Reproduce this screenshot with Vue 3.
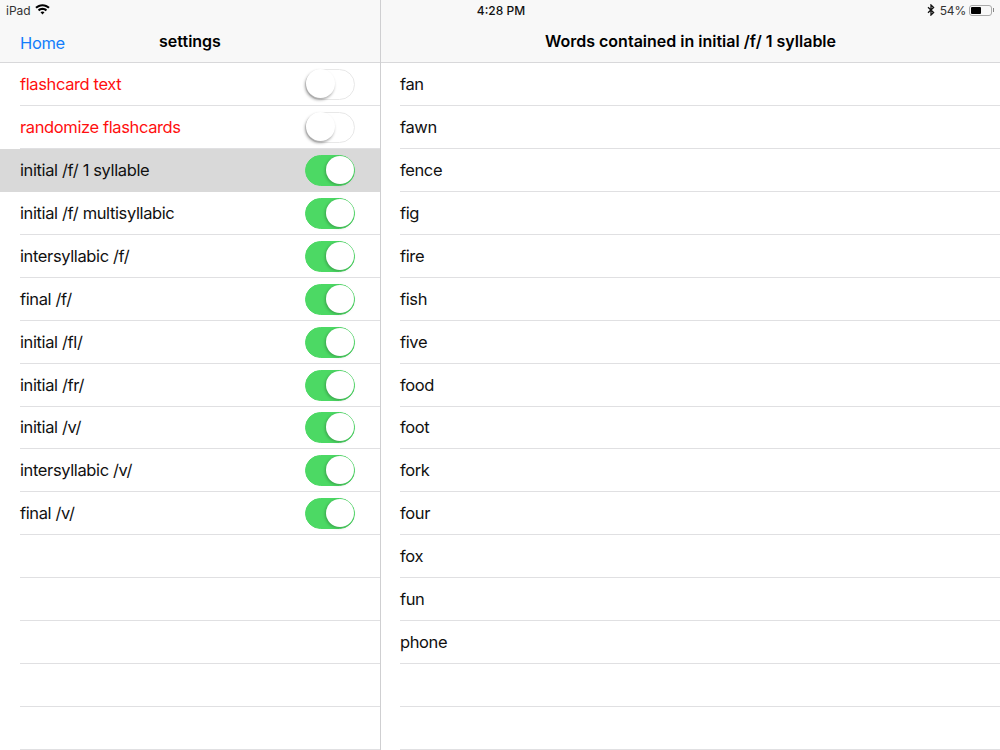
<template>
  <div class="ipad">
    <div class="status-bar">
      <div class="status-left">
        <span>iPad</span>
        <svg class="wifi" width="15" height="11" viewBox="0 0 15 11">
          <path d="M7.5 0.2C4.7 0.2 2.2 1.3 0.3 3.1L1.7 4.6C3.2 3.1 5.2 2.2 7.5 2.2s4.3 0.9 5.8 2.4l1.4-1.5C12.8 1.3 10.3 0.2 7.5 0.2z" />
          <path d="M7.5 3.8C5.7 3.8 4.1 4.5 2.9 5.7L4.3 7.2C5.1 6.4 6.2 5.9 7.5 5.9s2.4 0.5 3.2 1.3l1.4-1.5C10.9 4.5 9.3 3.8 7.5 3.8z" />
          <path d="M7.5 7.4C6.7 7.4 6 7.7 5.5 8.2L7.5 10.6 9.5 8.2C9 7.7 8.3 7.4 7.5 7.4z" />
        </svg>
      </div>
      <div class="status-time">4:28 PM</div>
      <div class="status-right">
        <svg class="bt" width="8" height="12" viewBox="0 0 8 12">
          <path d="M1 3.2L6.6 8.4 4 11V1L6.6 3.6 1 8.8" fill="none" stroke="#111" stroke-width="1.3" />
        </svg>
        <span class="pct">54%</span>
        <div class="battery"><div class="battery-fill" :style="{ width: 54 + '%' }"></div></div>
        <div class="battery-tip"></div>
      </div>
    </div>

    <div class="panes">
      <div class="pane side">
        <div class="nav">
          <a class="nav-back">Home</a>
          <div class="nav-title">settings</div>
        </div>
        <div class="row" v-for="item in settings" :key="item.label" :class="{ selected: item.selected }">
          <div class="row-inner">
            <span :class="{ red: item.red }">{{ item.label }}</span>
            <div class="switch" :class="{ on: item.on }"><div class="knob"></div></div>
          </div>
        </div>
        <div class="row" v-for="n in 5" :key="n"><div class="row-inner"></div></div>
      </div>

      <div class="pane main">
        <div class="nav">
          <div class="nav-title">Words contained in initial /f/ 1 syllable</div>
        </div>
        <div class="row" v-for="w in words" :key="w"><div class="row-inner">{{ w }}</div></div>
        <div class="row" v-for="n in 2" :key="n"><div class="row-inner"></div></div>
      </div>
    </div>
  </div>
</template>

<script setup>
const settings = [
  { label: 'flashcard text', red: true, on: false },
  { label: 'randomize flashcards', red: true, on: false },
  { label: 'initial /f/ 1 syllable', on: true, selected: true },
  { label: 'initial /f/ multisyllabic', on: true },
  { label: 'intersyllabic /f/', on: true },
  { label: 'final /f/', on: true },
  { label: 'initial /fl/', on: true },
  { label: 'initial /fr/', on: true },
  { label: 'initial /v/', on: true },
  { label: 'intersyllabic /v/', on: true },
  { label: 'final /v/', on: true }
]

const words = ['fan', 'fawn', 'fence', 'fig', 'fire', 'fish', 'five', 'food', 'foot', 'fork', 'four', 'fox', 'fun', 'phone']
</script>

<style>
html, body {
  margin: 0;
  overflow: hidden;
  background: #fff;
}
</style>

<style scoped>
.ipad {
  position: relative;
  width: 1000px;
  height: 750px;
  overflow: hidden;
  font-family: "Inter", "Liberation Sans", sans-serif;
  color: #111;
}

/* status bar sits over the nav bars */
.status-bar {
  position: absolute;
  top: 0;
  left: 0;
  right: 0;
  height: 20px;
  z-index: 2;
  display: grid;
  grid-template-columns: 1fr auto 1fr;
  align-items: center;
  padding: 0 6px 0 6px;
  font-size: 12px;
}

.status-left {
  display: flex;
  align-items: center;
  gap: 4px;
  color: #333;
}

.wifi {
  fill: #000;
  margin-top: -2px;
}

.status-time {
  font-weight: 500;
  transform: translateX(1px);
}

.status-right {
  display: flex;
  justify-content: flex-end;
  align-items: center;
  color: #333;
}

.pct {
  letter-spacing: -0.2px;
}

.bt {
  margin-right: 5px;
}

.battery {
  width: 23px;
  height: 11px;
  margin-left: 3px;
  padding: 1px;
  border: 1px solid #aaa;
  border-radius: 3px;
  box-sizing: border-box;
}

.battery-fill {
  height: 100%;
  background: #000;
  border-radius: 1px;
}

.battery-tip {
  width: 1px;
  height: 4px;
  margin-left: 1px;
  background: #888;
}

.panes {
  display: flex;
  height: 750px;
}

.pane {
  box-sizing: border-box;
}

.side {
  width: 381px;
  flex: none;
  border-right: 1px solid #cfcfd1;
}

.main {
  flex: 1;
}

.nav {
  position: relative;
  height: 63px;
  box-sizing: border-box;
  background: #f8f8f8;
  border-bottom: 1px solid #d8d8da;
  display: flex;
  align-items: flex-end;
  justify-content: center;
  padding-bottom: 11px;
}

.nav-title {
  font-size: 16px;
  font-weight: 600;
  line-height: 20px;
  color: #000;
}

.nav-back {
  position: absolute;
  left: 20px;
  bottom: 9px;
  font-size: 16.5px;
  letter-spacing: -0.38px;
  line-height: 20px;
  color: #147efb;
}

.row {
  height: 42.95px;
  box-sizing: border-box;
  padding-left: 20px;
}

.row-inner {
  height: 100%;
  box-sizing: border-box;
  border-bottom: 1px solid #e0e0e2;
  display: flex;
  align-items: center;
  justify-content: space-between;
  padding-right: 25px;
  font-size: 16.5px;
  letter-spacing: -0.38px;
  color: #111;
}

.row.selected {
  background: #d9d9d9;
}

.row.selected .row-inner {
  border-bottom-color: #d9d9d9;
}

.red {
  color: #ff0f0f;
}

.switch {
  position: relative;
  width: 50px;
  height: 31px;
  margin-top: 1px;
  box-sizing: border-box;
  border: 1.5px solid #e8e8e8;
  border-radius: 16px;
  background: #fff;
}

.switch.on {
  background: #4cd964;
  border-color: #4cd964;
}

.knob {
  position: absolute;
  top: -0.5px;
  left: -0.5px;
  width: 29px;
  height: 29px;
  border-radius: 50%;
  background: #fff;
  box-shadow: -1px 2px 3px rgba(0, 0, 0, 0.35);
}

.switch.on .knob {
  top: 0;
  left: auto;
  right: 0;
  width: 28px;
  height: 28px;
  box-shadow: -1px 1px 3px rgba(0, 0, 0, 0.25);
}

.main .row {
  padding-left: 19px;
}

.main .row-inner {
  padding-right: 0;
}
</style>
